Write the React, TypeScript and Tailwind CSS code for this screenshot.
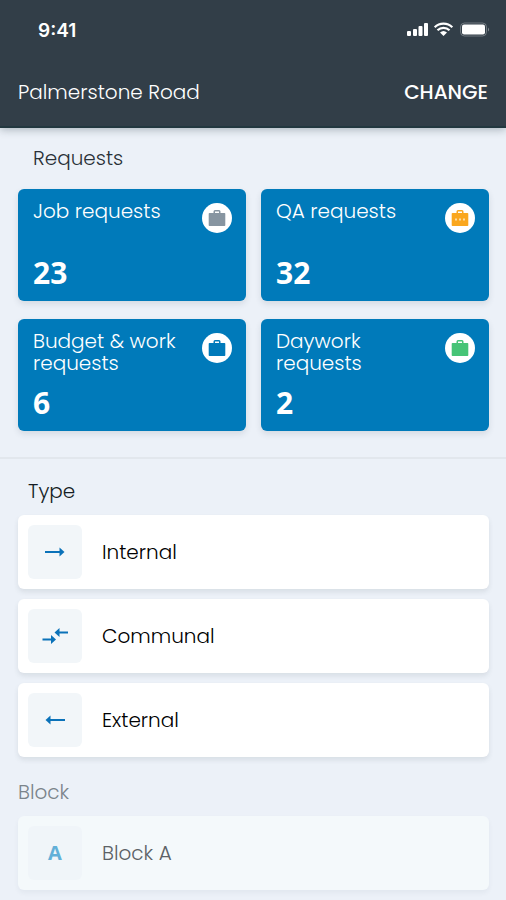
import type { ReactNode } from "react";

type BriefcaseProps = { className: string; dots?: boolean };

function Briefcase({ className, dots = false }: BriefcaseProps) {
  return (
    <svg viewBox="0 0 18 18" className={`size-[18px] ${className}`} aria-hidden="true">
      <path
        fill="currentColor"
        fillRule="evenodd"
        d="M7 1h4a1.5 1.5 0 0 1 1.5 1.5V4H16.500a.8.8 0 0 1 .8.8v11.400a.8.8 0 0 1-.8.8H1.500a.8.8 0 0 1-.8-.8V4.800a.8.8 0 0 1 .8-.8h4V2.500A1.500 1.500 0 0 1 7 1Zm0 1.500V4h4V2.500H7Z"
      />
      {dots && (
        <g fill="#fff" opacity="0.6">
          <rect x="4" y="9.500" width="2" height="2" />
          <rect x="8" y="9.500" width="2" height="2" />
          <rect x="12" y="9.500" width="2" height="2" />
        </g>
      )}
    </svg>
  );
}

function ArrowRight() {
  return (
    <svg viewBox="0 0 22 12" className="h-3 w-[22px]" aria-hidden="true">
      <path d="M1 6h16" stroke="currentColor" strokeWidth="2" />
      <path d="M15.500 1.500l5 4.500-5 4.500z" fill="currentColor" />
    </svg>
  );
}

function ArrowLeft() {
  return (
    <svg viewBox="0 0 22 12" className="h-3 w-[22px]" aria-hidden="true">
      <path d="M5 6h16" stroke="currentColor" strokeWidth="2" />
      <path d="M6.500 1.500L1.500 6l5 4.500z" fill="currentColor" />
    </svg>
  );
}

function ArrowsMeeting() {
  return (
    <svg viewBox="0 0 26 18" className="h-[18px] w-[26px]" aria-hidden="true">
      <path d="M16 5.500h10M0.500 12.500h10" stroke="currentColor" strokeWidth="2" />
      <path d="M17.500 1L12.500 5.500l5 4.500zM9 8l5 4.500L9 17z" fill="currentColor" />
    </svg>
  );
}

function StatusIcons() {
  return (
    <svg viewBox="0 0 84 18" className="h-[18px] w-[84px]" role="img" aria-label="Signal, Wi-Fi and battery">
      <g fill="#fff">
        <rect x="1" y="11" width="4" height="5" rx="1" />
        <rect x="7" y="9" width="4" height="7" rx="1" />
        <rect x="12.500" y="6" width="4" height="10" rx="1" />
        <rect x="18" y="3" width="4" height="13" rx="1" />
        <path d="M37.500 16l-3.500-3.500a5.200 5.200 0 0 1 7 0z" />
      </g>
      <g fill="none" stroke="#fff" strokeWidth="2.200">
        <path d="M31.500 10.300a8.600 8.600 0 0 1 12 0" />
        <path d="M28.700 7.200a12.600 12.600 0 0 1 17.600 0" />
      </g>
      <rect x="54.500" y="3" width="26" height="13" rx="4" fill="none" stroke="#fff" strokeOpacity="0.3" />
      <rect x="56" y="4.500" width="23" height="10" rx="2" fill="#fff" />
      <path d="M82 7.500a2.500 2.500 0 0 1 0 4z" fill="#fff" opacity="0.4" />
    </svg>
  );
}

const requests: { label: string; count: number; icon: ReactNode }[] = [
  { label: "Job requests", count: 23, icon: <Briefcase className="text-[#8795a1]" /> },
  { label: "QA requests", count: 32, icon: <Briefcase className="text-[#faa71e]" dots /> },
  { label: "Budget & work requests", count: 6, icon: <Briefcase className="text-[#007aba]" /> },
  { label: "Daywork requests", count: 2, icon: <Briefcase className="text-[#45c476]" /> },
];

const types: { label: string; icon: ReactNode }[] = [
  { label: "Internal", icon: <ArrowRight /> },
  { label: "Communal", icon: <ArrowsMeeting /> },
  { label: "External", icon: <ArrowLeft /> },
];

function Row({ label, icon, disabled = false }: { label: string; icon: ReactNode; disabled?: boolean }) {
  return (
    <button
      type="button"
      disabled={disabled}
      className="flex w-full items-center gap-5 rounded-md bg-white p-[10px] text-left text-black shadow-[0_3px_5px_rgba(40,60,70,0.1)] disabled:bg-[#f4f9fb] disabled:text-[#5c6266] disabled:shadow-[0_3px_5px_rgba(40,60,70,0.05)]"
    >
      <span
        className={`flex size-[54px] shrink-0 items-center justify-center rounded-md ${
          disabled ? "bg-[#f0f5f9] text-[#62b0d8]" : "bg-[#f2f6f9] text-[#0b72b9]"
        }`}
      >
        {icon}
      </span>
      <span>{label}</span>
    </button>
  );
}

export default function App() {
  return (
    <div className="min-h-screen bg-[#ecf1f8] font-[Poppins,Inter,sans-serif] text-xl leading-[22px] font-light text-[#161d24]">
      <header className="border-b-2 border-[#233840] bg-[#323e48] text-white shadow-[0_2px_8px_rgba(30,50,60,0.3)]">
        <div className="flex h-[58px] items-center justify-between pr-4 pl-[38px]">
          <span className="pt-1 font-[Inter,sans-serif] text-[19px] font-semibold">9:41</span>
          <StatusIcons />
        </div>
        <div className="flex h-[68px] items-center justify-between px-[18px]">
          <h1>Palmerstone Road</h1>
          <button type="button" className="font-medium">
            CHANGE
          </button>
        </div>
      </header>

      <main>
        <section className="border-b-2 border-[#e2e7ed] pt-[19px] pr-[17px] pb-[26px] pl-[18px]">
          <h2 className="mb-5 px-[15px] text-[#2a3138]">Requests</h2>
          <div className="grid grid-cols-2 gap-x-[15px] gap-y-[18px]">
            {requests.map((r) => (
              <button
                key={r.label}
                type="button"
                className="flex h-28 flex-col justify-between rounded-md bg-[#007aba] pt-[11px] pr-[14px] pb-3 pl-[15px] text-left text-white shadow-[0_3px_6px_rgba(40,60,70,0.12)]"
              >
                <span className="flex w-full items-start justify-between gap-2">
                  <span>{r.label}</span>
                  <span className="mt-[3px] flex size-[30px] shrink-0 items-center justify-center rounded-full bg-white">
                    {r.icon}
                  </span>
                </span>
                <span className="font-['Open_Sans',sans-serif] text-3xl leading-8 font-bold">{r.count}</span>
              </button>
            ))}
          </div>
        </section>

        <section className="pt-[21px] pr-[17px] pl-[18px]">
          <h2 className="mb-[13px] px-[10px]">Type</h2>
          <div className="flex flex-col gap-[10px]">
            {types.map((t) => (
              <Row key={t.label} label={t.label} icon={t.icon} />
            ))}
          </div>
        </section>

        <section className="pt-6 pr-[17px] pb-[10px] pl-[18px]">
          <h2 className="mb-[13px] text-[#7b848b]">Block</h2>
          <Row
            label="Block A"
            disabled
            icon={<span className="font-['Open_Sans',sans-serif] font-bold">A</span>}
          />
        </section>
      </main>
    </div>
  );
}
